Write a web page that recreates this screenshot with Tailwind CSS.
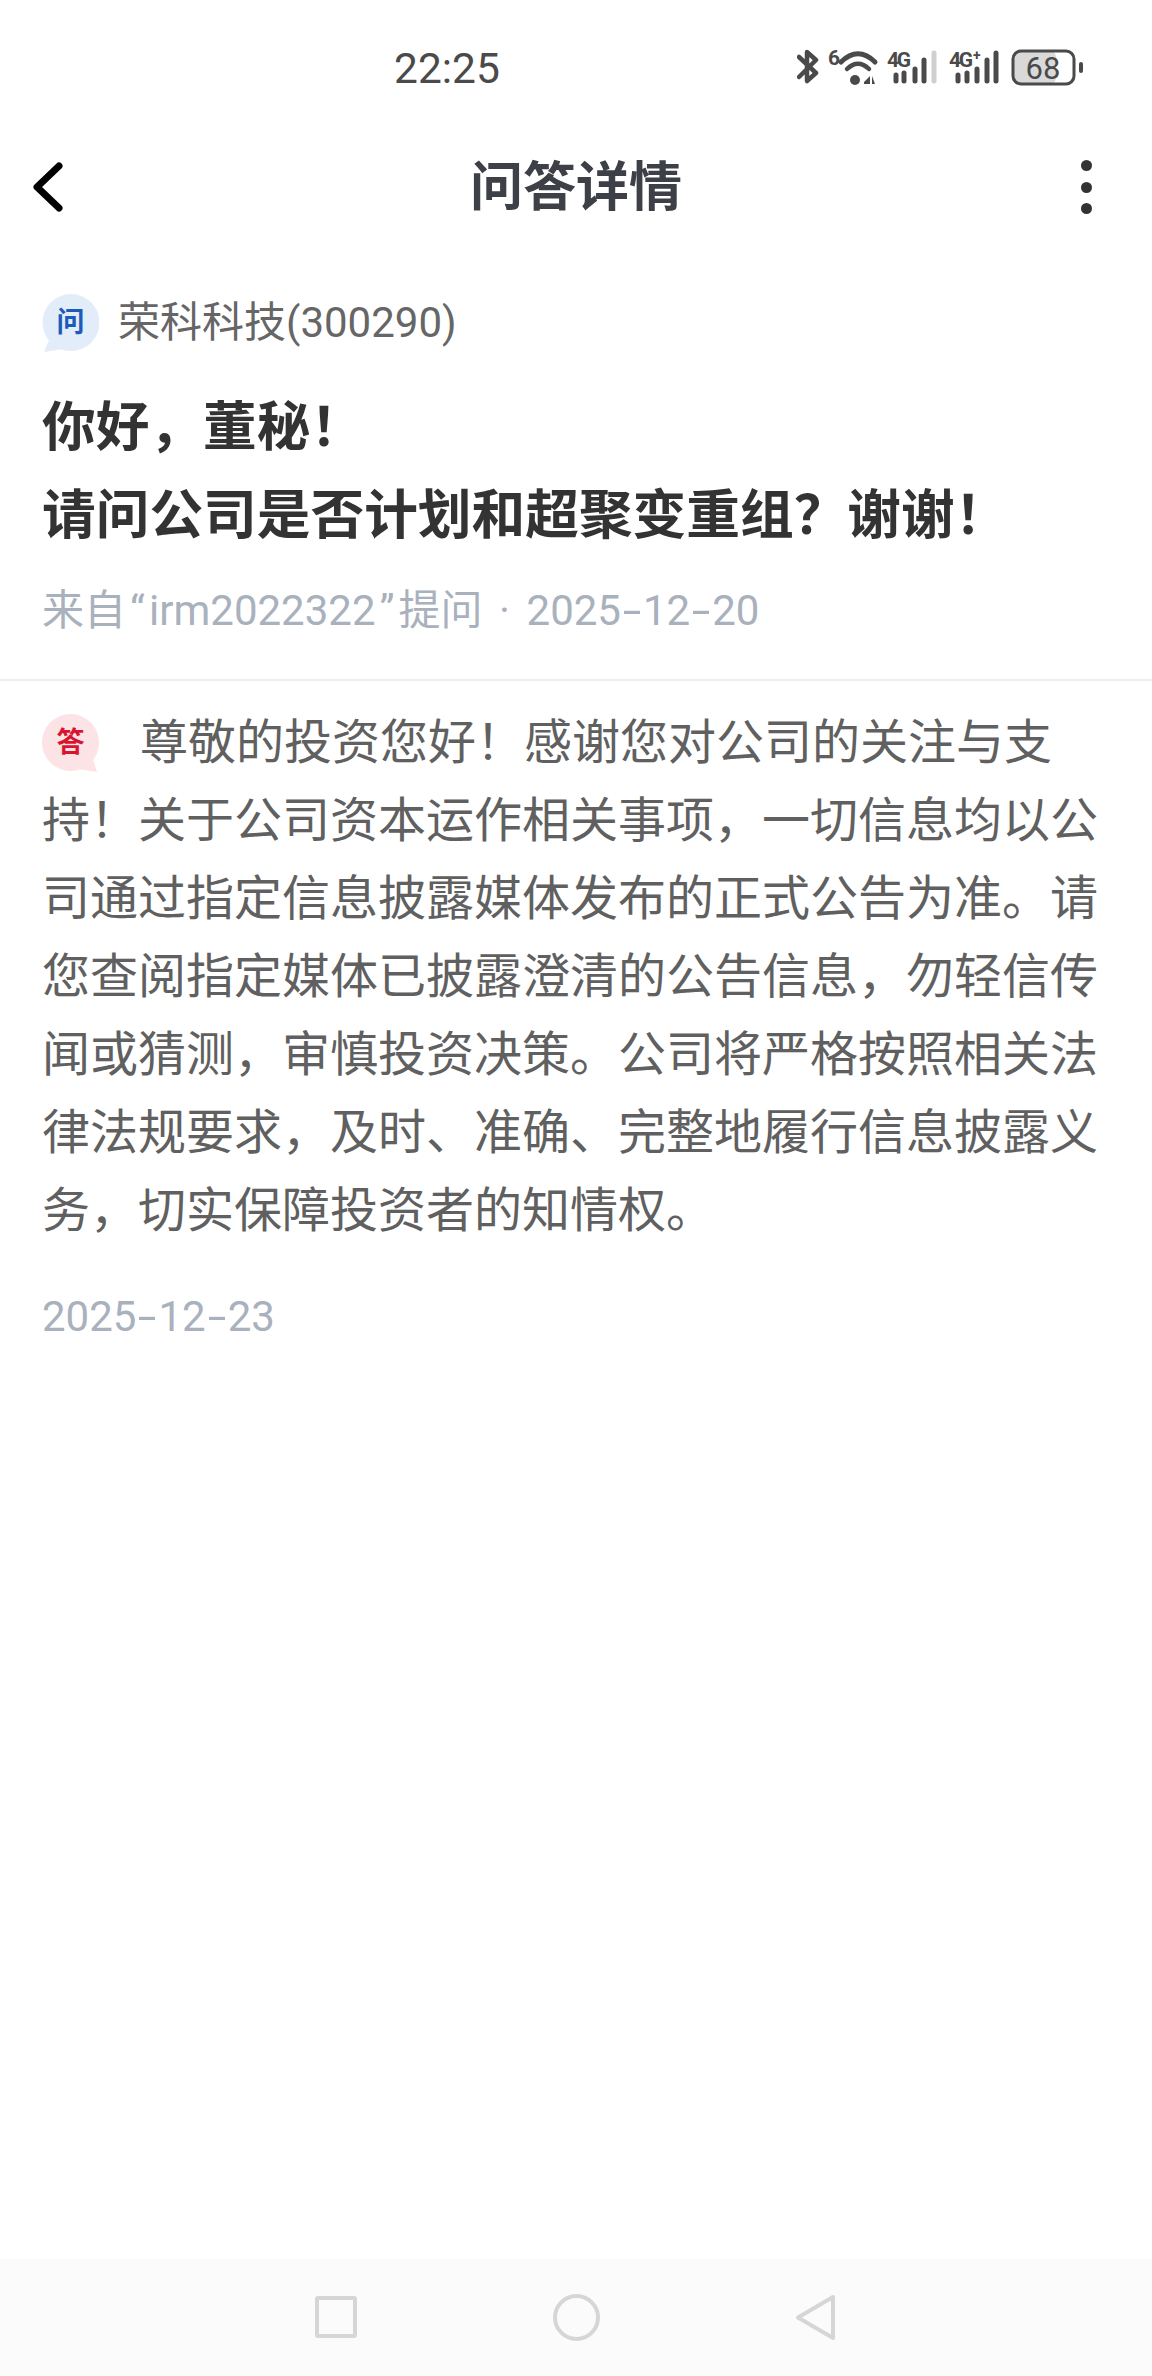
<!DOCTYPE html>
<html lang="zh-CN">
<head>
<meta charset="utf-8">
<script src="https://cdn.jsdelivr.net/npm/@tailwindcss/browser@4"></script>
<title>问答详情</title>
</head>
<body class="bg-white">
<div class="w-[1152px] h-[2376px] flex flex-col bg-white overflow-hidden font-['Roboto','Noto_Sans_CJK_SC',sans-serif]">
  <!-- status bar -->
  <div class="h-[136px] shrink-0 flex items-center pl-[394px] pr-[67px] justify-between">
    <span class="mt-[2px] text-[42.5px] leading-none text-[#4a4a4a]">22:25</span>
    <svg class="mt-[4px] w-[288px] h-[50px]" viewBox="797 45 288 50" fill="none">
      <path d="M799 57 L816 73 L807 81 V52 L816 60 L799 77" stroke="#4a4a4a" stroke-width="4.5" stroke-linecap="round" stroke-linejoin="round"/>
      <text x="828" y="65" font-size="21" font-weight="700" fill="#4a4a4a" font-family="Roboto">6</text>
      <path d="M841 62 C852 51 864 51 875 62" stroke="#4a4a4a" stroke-width="5" stroke-linecap="round"/>
      <path d="M847 69 C854 62 862 62 869 69" stroke="#4a4a4a" stroke-width="4.5" stroke-linecap="round"/>
      <circle cx="855" cy="80" r="5" fill="#4a4a4a"/>
      <path d="M864 82 L870 76 V84 H864 Z M872 76 V84 H875 Z" fill="#4a4a4a"/>
      <text x="887" y="67" font-size="21" font-weight="700" fill="#4a4a4a" font-family="Roboto" textLength="24">4G</text>
      <g stroke-width="5" stroke-linecap="round" stroke="#4a4a4a">
        <path d="M896 75V81M904 73V81M915 69V81M924 60V81"/>
        <path d="M934 53V81" stroke="#cfcfcf"/>
        <path d="M958 75V81M967 73V81M977 69V81M987 60V81M996 53V81"/>
      </g>
      <text x="949" y="67" font-size="21" font-weight="700" fill="#4a4a4a" font-family="Roboto" textLength="24">4G</text>
      <text x="973" y="60" font-size="14" font-weight="700" fill="#4a4a4a" font-family="Roboto">+</text>
      <rect x="1014" y="51" width="42" height="33" rx="6" fill="#d9d9d9"/>
      <rect x="1013" y="51" width="61" height="33" rx="8" stroke="#4a4a4a" stroke-width="3"/>
      <rect x="1079" y="62" width="4" height="11" rx="2" fill="#4a4a4a"/>
      <text x="1043" y="79" font-size="31" text-anchor="middle" fill="#4a4a4a" font-family="Roboto">68</text>
    </svg>
  </div>
  <!-- header -->
  <div class="h-[102px] shrink-0 flex items-center justify-between pl-[31px] pr-[60px]">
    <div class="w-[40px]">
      <svg class="w-[32px] h-[52px]" viewBox="0 0 32 52" fill="none"><path d="M28 5 L6 26 L28 47" stroke="#000" stroke-width="7" stroke-linecap="round" stroke-linejoin="round"/></svg>
    </div>
    <h1 class="mt-[2px] text-[53px] leading-none font-bold text-[#3d4046]">问答详情</h1>
    <div class="flex flex-col gap-[10.5px]">
      <span class="w-[11px] h-[11px] rounded-full bg-[#333]"></span>
      <span class="w-[11px] h-[11px] rounded-full bg-[#333]"></span>
      <span class="w-[11px] h-[11px] rounded-full bg-[#333]"></span>
    </div>
  </div>
  <!-- question -->
  <div class="px-[42px] pt-[56px] border-b-2 border-[#eeeeee] h-[443px] shrink-0">
    <div class="flex items-center h-[58px] gap-[19px]">
      <div class="relative w-[57px] h-[58px] shrink-0 flex items-center justify-center">
        <svg class="absolute inset-0" width="57" height="58" viewBox="0 0 57 58"><circle cx="29" cy="28.5" r="28.5" fill="#e3edfa"/><path d="M2 58 L8 44 L22 55 Z" fill="#e3edfa"/></svg>
        <span class="relative text-[28px] leading-none font-bold text-[#1c5cb8]">问</span>
      </div>
      <span class="text-[42px] leading-none text-[#666666]">荣科科技(300290)</span>
    </div>
    <div class="mt-[32px] text-[53.7px] leading-[88px] font-bold text-[#333333]">
      <p>你好，董秘！</p>
      <p class="whitespace-nowrap">请问公司是否计划和超聚变重组？谢谢！</p>
    </div>
    <div class="mt-[18px] h-[66px] flex items-center text-[42px] leading-none text-[#a9b1bd] whitespace-nowrap">
      <span>来自<span class="inline-block w-[23px] text-center">“</span>irm2022322<span class="inline-block w-[23px] text-center">”</span>提问<span class="inline-block w-[44px] text-center">·</span>2025<span class="inline-block w-[22px] text-center scale-x-[1.6]">-</span>12<span class="inline-block w-[22px] text-center scale-x-[1.6]">-</span>20</span>
    </div>
  </div>
  <!-- answer -->
  <div class="px-[42px] pt-[23px]">
    <div class="text-[48px] leading-[78px] text-[#606060]">
      <div class="float-left relative w-[57px] h-[58px] mt-[10px] mr-[41px] flex items-center justify-center">
        <svg class="absolute inset-0" width="57" height="58" viewBox="0 0 57 58"><circle cx="28.5" cy="28.5" r="28.5" fill="#fbe3e6"/><path d="M55 58 L50 42 L36 55 Z" fill="#fbe3e6"/></svg>
        <span class="relative text-[28px] leading-none font-bold text-[#d9142f]">答</span>
      </div>
      尊敬的投资您好！感谢您对公司的关注与支持！关于公司资本运作相关事项，一切信息均以公司通过指定信息披露媒体发布的正式公告为准。请您查阅指定媒体已披露澄清的公告信息，勿轻信传闻或猜测，审慎投资决策。公司将严格按照相关法律法规要求，及时、准确、完整地履行信息披露义务，切实保障投资者的知情权。
    </div>
    <div class="mt-[46px] text-[42px] leading-none text-[#a9b1bd]">2025<span class="inline-block w-[22px] text-center scale-x-[1.6]">-</span>12<span class="inline-block w-[22px] text-center scale-x-[1.6]">-</span>23</div>
  </div>
  <!-- nav bar -->
  <div class="mt-auto h-[117px] shrink-0 bg-[#fbfbfb] flex items-center justify-between pl-[315px] pr-[316px] pb-[1px]">
    <div class="w-[42px] h-[42px] rounded-[3px] border-4 border-[#d6d6d6]"></div>
    <div class="w-[47px] h-[47px] rounded-full border-4 border-[#d6d6d6]"></div>
    <svg class="w-[41px] h-[47px]" viewBox="0 0 41 47" fill="none"><path d="M38 3 V44 L3 23.5 Z" stroke="#d6d6d6" stroke-width="4" stroke-linejoin="round"/></svg>
  </div>
</div>
</body>
</html>
